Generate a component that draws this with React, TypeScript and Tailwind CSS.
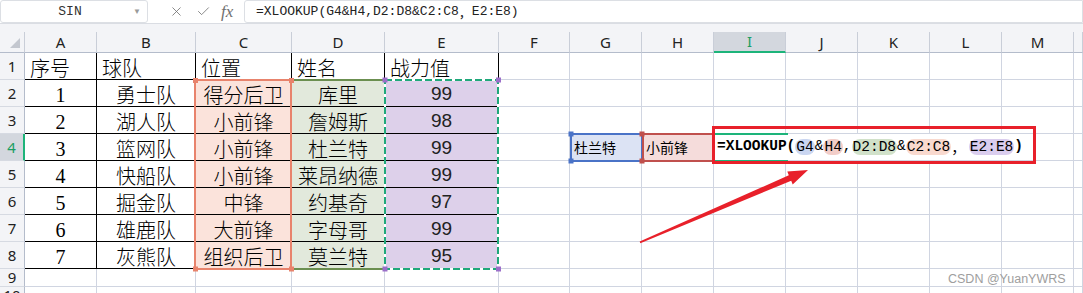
import React from "react";
import { X, Check } from "lucide-react";

const letters = ["", "A", "B", "C", "D", "E", "F", "G", "H", "I", "J", "K", "L", "M", ""];

const table: string[][] = [
  ["序号", "球队", "位置", "姓名", "战力值"],
  ["1", "勇士队", "得分后卫", "库里", "99"],
  ["2", "湖人队", "小前锋", "詹姆斯", "98"],
  ["3", "篮网队", "小前锋", "杜兰特", "99"],
  ["4", "快船队", "小前锋", "莱昂纳德", "99"],
  ["5", "掘金队", "中锋", "约基奇", "97"],
  ["6", "雄鹿队", "大前锋", "字母哥", "99"],
  ["7", "灰熊队", "组织后卫", "莫兰特", "95"],
];

const CJK = "font-['Noto_Sans_CJK_SC',sans-serif]";

function cellClass(r: number, c: number): string {
  if (r === 0 && c === 0)
    return "relative bg-[#f3f4f7] border-r border-b border-r-[#c9ced8] border-b-[#b4bccb]";
  if (r === 0) {
    if (c === 9)
      return "bg-[#d3d7de] border-r border-r-[#c9ced8] border-b-2 border-b-[#1db47a] text-[#1a9e63] flex items-center justify-center text-[15px] font-['Noto_Sans',sans-serif]";
    return "bg-[#f3f4f7] border-r border-r-[#c9ced8] border-b border-b-[#b4bccb] text-[#222] flex items-center justify-center text-[15px] font-['Noto_Sans',sans-serif]";
  }
  if (c === 0) {
    if (r === 4)
      return "bg-[#d3d7de] border-r-2 border-r-[#1db47a] border-b border-b-[#d6dae2] text-[#1a9e63] flex items-center justify-center text-[15px] font-['Noto_Sans',sans-serif]";
    return "bg-[#f3f4f7] border-r border-r-[#b4bccb] border-b border-b-[#d6dae2] text-[#222] flex items-center justify-center text-[15px] font-['Noto_Sans',sans-serif]";
  }
  const inTable = r >= 1 && r <= 8 && c >= 1 && c <= 5;
  let cls = inTable
    ? "border-r border-b border-r-black border-b-black"
    : "border-r border-b border-r-[#d0d5e1] border-b-[#d0d5e1]";
  if (r >= 2 && r <= 8) {
    if (c === 3) cls += " bg-[#fbe3db]";
    if (c === 4) cls += " bg-[#e2e9dc]";
    if (c === 5) cls += " bg-[#ddd0ea]";
  }
  if (r === 4 && c === 7) cls += " bg-[#dce3f4]";
  if (r === 4 && c === 8) cls += " bg-[#f5dcdb]";
  if (r === 4 && c === 9) cls += " relative z-10 bg-white";
  return cls;
}

function Pill({ cls, children }: { cls: string; children: React.ReactNode }) {
  return <span className={"rounded-full px-[1px] leading-[16px] font-normal " + cls}>{children}</span>;
}

function CellContent({ r, c }: { r: number; c: number }) {
  if (r === 0 && c === 0) {
    return (
      <svg className="absolute left-0 top-0" width="25" height="21" viewBox="0 0 25 21">
        <polygon points="20,6 20,16 10,16" fill="#c3c7cf" />
      </svg>
    );
  }
  if (r === 0) return <>{letters[c]}</>;
  if (c === 0) return <>{r}</>;
  if (r >= 1 && r <= 8 && c >= 1 && c <= 5) {
    const v = table[r - 1][c - 1];
    if (r === 1)
      return (
        <div className={"h-full flex items-center pl-[5px] pt-[3px] text-[20px] font-light text-black " + CJK}>{v}</div>
      );
    if (c === 1)
      return (
        <div className="h-full flex items-center justify-center pt-[3px] text-[20px] text-black font-['Liberation_Serif',serif]">
          {v}
        </div>
      );
    if (c === 5)
      return (
        <div className="h-full flex items-center justify-center pt-[3px] text-[19px] text-[#222] font-['Liberation_Sans',sans-serif]">
          {v}
        </div>
      );
    return (
      <div className={"h-full flex items-center justify-center pt-[3px] text-[20px] font-light text-black " + CJK}>{v}</div>
    );
  }
  if (r === 4 && c === 7)
    return <div className={"h-full flex items-center pl-[4px] pt-[1px] text-[14px] text-black " + CJK}>杜兰特</div>;
  if (r === 4 && c === 8)
    return <div className={"h-full flex items-center pl-[4px] pt-[1px] text-[14px] text-black " + CJK}>小前锋</div>;
  if (r === 4 && c === 9)
    return (
      <div className="absolute left-0 top-0 h-full flex items-center pl-[3px] pr-[6px] bg-white whitespace-nowrap font-['Liberation_Mono',monospace] text-[14.5px] text-black">
        <span className="font-bold">=XLOOKUP(</span>
        <Pill cls="bg-[#cad6f1]">G4</Pill>
        <span>&amp;</span>
        <Pill cls="bg-[#f2cdc8]">H4</Pill>
        <span>,</span>
        <Pill cls="bg-[#d1e1c9]">D2:D8</Pill>
        <span>&amp;</span>
        <Pill cls="bg-[#f9d9ce]">C2:C8</Pill>
        <span className={CJK}>，</span>
        <Pill cls="ml-[3px] bg-[#dacdee]">E2:E8</Pill>
        <span className="font-bold">)</span>
      </div>
    );
  return null;
}

function Sq({ x, y, fill }: { x: number; y: number; fill: string }) {
  return <rect x={x - 2.5} y={y - 2.5} width="5" height="5" fill={fill} />;
}

function Overlay() {
  return (
    <svg className="absolute left-0 top-0 z-20 pointer-events-none" width="1083" height="293" viewBox="0 0 1083 293">
      {/* C2:C8 */}
      <rect x="195" y="80" width="96" height="189" fill="none" stroke="#e8836c" strokeWidth="2" />
      {/* D2:D8 */}
      <line x1="292" y1="80" x2="385" y2="80" stroke="#6b8f50" strokeWidth="2" />
      <line x1="292" y1="269" x2="385" y2="269" stroke="#6b8f50" strokeWidth="2" />
      {/* E2:E8 marching ants */}
      <rect x="385" y="80" width="113" height="189" fill="none" stroke="#ffffff" strokeWidth="2" />
      <rect x="385" y="80" width="113" height="189" fill="none" stroke="#1fa87a" strokeWidth="2" strokeDasharray="7 3" />
      {/* G4 / H4 */}
      <rect x="571" y="134" width="71" height="27" fill="none" stroke="#4a73c7" strokeWidth="2" />
      <rect x="643" y="134" width="71" height="27" fill="none" stroke="#c0504d" strokeWidth="2" />
      <Sq x={195.5} y={80.5} fill="#e8836c" />
      <Sq x={291.5} y={80.5} fill="#e8836c" />
      <Sq x={195.5} y={269} fill="#e8836c" />
      <Sq x={291.5} y={269} fill="#e8836c" />
      <Sq x={385} y={80} fill="#9b6fc9" />
      <Sq x={498.5} y={80} fill="#9b6fc9" />
      <Sq x={385} y={269} fill="#9b6fc9" />
      <Sq x={498.5} y={269} fill="#9b6fc9" />
      <Sq x={571} y={134} fill="#4a73c7" />
      <Sq x={571} y={161} fill="#4a73c7" />
      <Sq x={642} y={134} fill="#c0504d" />
      <Sq x={642} y={161} fill="#c0504d" />
      {/* active cell edges */}
      <line x1="714" y1="134" x2="788" y2="134" stroke="#1db47a" strokeWidth="2" />
      <line x1="714" y1="161" x2="788" y2="161" stroke="#1db47a" strokeWidth="2" />
      {/* annotation */}
      <rect x="713.5" y="127.5" width="321" height="35" fill="none" stroke="#e8202a" strokeWidth="3" />
      <polygon
        points="639.7,241.6 788.8,175.2 787.3,171.5 808,170 792.7,184.5 791.2,180.8 640.3,243.2"
        fill="#e8202a"
      />
    </svg>
  );
}

export default function App() {
  const rows = Array.from({ length: 11 }, (_, i) => i);
  const cols = Array.from({ length: 15 }, (_, i) => i);
  return (
    <div className="relative w-[1083px] h-[293px] overflow-hidden bg-white font-['Liberation_Sans',sans-serif]">
      {/* formula bar */}
      <div className="h-[24px] flex items-start bg-white border-b border-[#dadde3]">
        <div className="w-[148px] h-[23px] border border-[#dcdfe4] rounded-[3px] flex items-center">
          <span className="flex-1 text-center font-['Liberation_Mono',monospace] text-[13px] text-[#333] pl-[6px]">SIN</span>
          <span className="w-[14px] text-[8px] text-[#9a9a9a] leading-none">▼</span>
        </div>
        <div className="w-[96px] h-[23px] flex items-center text-[#6f6f6f]">
          <X size={15} strokeWidth={1.3} className="ml-[21px]" />
          <Check size={15} strokeWidth={1.3} className="ml-[12px]" />
          <span className="ml-[10px] font-['Liberation_Serif',serif] italic text-[17px] leading-none">fx</span>
        </div>
        <div className="flex-1 h-[23px] border border-[#dcdfe4] rounded-l-[3px] flex items-center pl-[11px] font-['Liberation_Mono',monospace] text-[13px] text-[#222] whitespace-nowrap">
          =XLOOKUP(G4&amp;H4,D2:D8&amp;C2:C8<span className={CJK}>，</span>E2:E8)
        </div>
      </div>
      <div className="h-[8px] bg-[#f3f4f7]" />
      {/* grid */}
      <div className="grid grid-cols-[25px_72px_99px_96px_93px_114px_71px_72px_72px_72px_72px_72px_72px_72px_1fr] grid-rows-[21px_27px_27px_27px_27px_27px_27px_27px_27px_18px_18px]">
        {rows.map((r) =>
          cols.map((c) => (
            <div key={r + "-" + c} className={cellClass(r, c)}>
              <CellContent r={r} c={c} />
            </div>
          ))
        )}
      </div>
      <Overlay />
      <div className="absolute left-[948px] top-[270px] z-30 text-[12.5px] text-[#9e9e9e] font-['Liberation_Sans',sans-serif]">
        CSDN @YuanYWRS
      </div>
    </div>
  );
}
